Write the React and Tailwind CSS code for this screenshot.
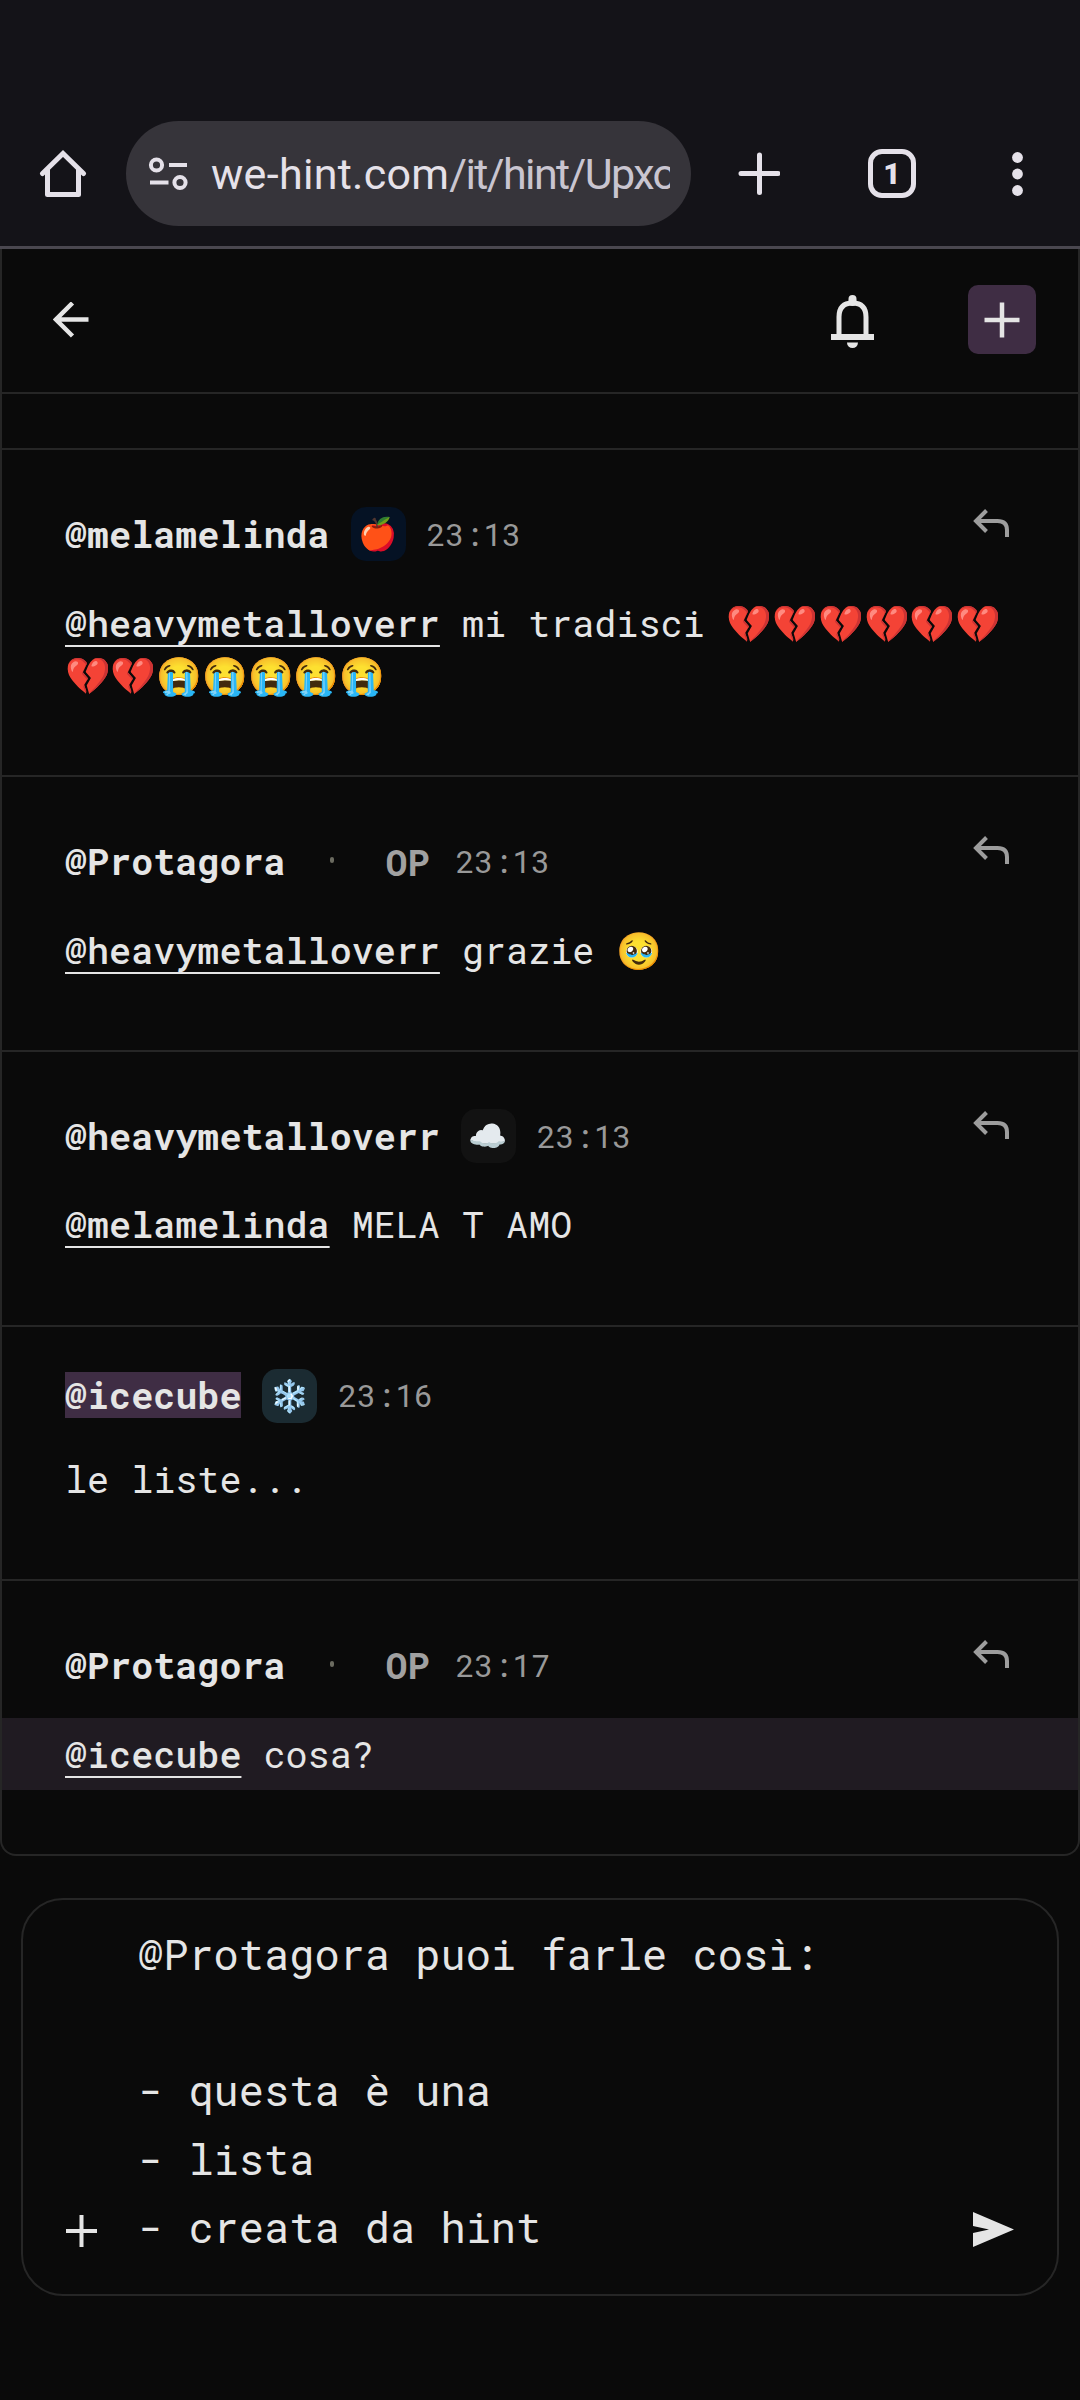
import React from 'react';

const messages = [
  {
    id: 1,
    user: '@melamelinda',
    badge: '🍎',
    badgeClass: 'bg-[#051224]',
    time: '23:13',
    mention: '@heavymetalloverr',
    text: ' mi tradisci 💔💔💔💔💔💔 💔💔😭😭😭😭😭',
    canReply: true,
  },
  {
    id: 2,
    user: '@Protagora',
    op: true,
    time: '23:13',
    mention: '@heavymetalloverr',
    text: ' grazie 🥹',
    canReply: true,
  },
  {
    id: 3,
    user: '@heavymetalloverr',
    badge: '☁️',
    badgeClass: 'bg-[#121212]',
    time: '23:13',
    mention: '@melamelinda',
    text: ' MELA T AMO',
    canReply: true,
  },
  {
    id: 4,
    user: '@icecube',
    badge: '❄️',
    badgeClass: 'bg-[#1b2b32]',
    time: '23:16',
    text: 'le liste...',
    own: true,
  },
  {
    id: 5,
    user: '@Protagora',
    op: true,
    time: '23:17',
    mention: '@icecube',
    text: ' cosa?',
    canReply: true,
    highlighted: true,
  },
];

const HomeIcon = () => (
  <svg className="w-12 h-12" viewBox="0 0 48 48" fill="none" stroke="#e5e1e9" strokeWidth="5" strokeLinecap="round" strokeLinejoin="round">
    <path d="M3.500 23.500L24 3.500L44.500 23.500" strokeLinejoin="miter" />
    <path d="M8.500 20V44.500H39.500V20" />
  </svg>
);

const SiteIcon = () => (
  <svg className="w-10 h-[34px]" viewBox="0 0 40 34" fill="none" stroke="#e5e1e9" strokeWidth="4">
    <circle cx="8.500" cy="8" r="5.600" />
    <path d="M21 8H39M2 25.500H20.500" />
    <circle cx="32" cy="25.500" r="5.600" />
  </svg>
);

const ReplyIcon = () => (
  <svg className="w-9 h-7" viewBox="0 0 36 28" fill="none" stroke="#9d9d9d" strokeWidth="4">
    <path d="M13.500 1.500L3 12L13.500 22.500" />
    <path d="M3 12H24.500Q34 12 34 21V28" />
  </svg>
);

const BrowserBar = () => (
  <div className="h-[249px] pt-[121px] bg-[#141318] border-b-3 border-[#4a474f]">
    <div className="flex items-center h-[105px] pl-[39px]">
      <HomeIcon />
      <div className="flex items-center w-[565px] h-[105px] ml-[39px] pl-[22px] rounded-full bg-[#36343a]">
        <SiteIcon />
        <div className="w-[459px] ml-[23px] mt-0.5 overflow-hidden whitespace-nowrap font-['Roboto',sans-serif] text-[43px] tracking-[-1.600px] text-[#c9c5d0]">
          <span className="tracking-[0.300px] text-[#e5e1e9]">we-hint.com</span>/it/hint/Upxo
        </div>
      </div>
      <svg className="w-[42px] h-[44px] ml-[47px]" viewBox="0 0 42 44" stroke="#e5e1e9" strokeWidth="5" strokeLinecap="round">
        <path d="M21.500 3V40.500M3 21.500H40" />
      </svg>
      <div className="flex items-center justify-center w-12 h-[49px] ml-[88px] rounded-[14px] border-5 border-[#e5e1e9] font-['Roboto',sans-serif] text-[30px] font-black leading-none text-[#e5e1e9]">
        1
      </div>
      <svg className="w-3 h-[46px] ml-[95px]" viewBox="0 0 12 46" fill="#e5e1e9">
        <circle cx="6.500" cy="6.500" r="5.400" />
        <circle cx="6.500" cy="23" r="5.400" />
        <circle cx="6.500" cy="39.500" r="5.400" />
      </svg>
    </div>
  </div>
);

const TopBar = () => (
  <div className="flex items-center h-[145px] pl-[51px] pr-[42px] pb-[2px] border-b-2 border-[#262626]">
    <svg className="w-9 h-9" viewBox="0 0 36 36" fill="none" stroke="#e5e5e5" strokeWidth="4.500">
      <path d="M35.500 17.500H3M19.500 1L3 17.500L19.500 34" />
    </svg>
    <svg className="w-[44px] h-[56px] ml-auto mt-[5px]" viewBox="0 0 44 56" fill="none" stroke="#e5e5e5" strokeWidth="5">
      <path d="M21.500 5V8" strokeWidth="8" strokeLinecap="round" />
      <path d="M8 42.500V23Q8 9 21.500 9Q35 9 35 23V42.500" />
      <path d="M0 43H43" strokeWidth="6" />
      <path d="M16 48.500H27A5.500 5.500 0 0 1 16 48.500Z" fill="#e5e5e5" stroke="none" />
    </svg>
    <div className="flex items-center justify-center w-[68px] h-[69px] ml-[93px] rounded-[10px] bg-[#3f2d44]">
      <svg className="w-9 h-9" viewBox="0 0 36 36" stroke="#e5e5e5" strokeWidth="4.500">
        <path d="M18 0.500V35.500M0.500 18H35.500" />
      </svg>
    </div>
  </div>
);

const Message = ({ message }) => (
  <div className={message.own ? 'pt-[42px] pb-[73.700px]' : 'pt-[57px] pb-[73.700px]'}>
    <div className="flex items-center h-[54px] pl-[63px] pr-[69px]">
      <span className={message.own ? 'h-[46px] mb-0.5 leading-[46px] font-bold bg-[#3f2d44]' : 'h-[46px] leading-[46px] font-bold'}>
        {message.user}
      </span>
      {message.badge && (
        <span className={`flex items-center justify-center w-[55px] h-[54px] ml-[21px] rounded-[15px] text-[31.500px] ${message.badgeClass}`}>
          {message.badge}
        </span>
      )}
      {message.op && (
        <>
          <span className="w-1 h-1.5 ml-[44px] mb-0.5 mr-[52px] rounded-full bg-[#6b6b60]"></span>
          <span className="font-bold text-[#a1a1a1]">OP</span>
        </>
      )}
      <span className={message.op ? 'ml-[26px] mt-px text-[31.500px] text-[#999999]' : 'ml-[21px] mt-px text-[31.500px] text-[#999999]'}>
        {message.time}
      </span>
      {message.canReply && (
        <span className="ml-auto mb-[22px]">
          <ReplyIcon />
        </span>
      )}
    </div>
    <div className={message.highlighted ? 'mt-[26px] -mb-[10px] px-[63px] py-[10px] bg-[#201b22]' : message.own ? 'mt-[30px] px-[63px]' : 'mt-[35.500px] px-[63px]'}>
      <p className="leading-[52.500px]">
        {message.mention && (
          <span className="font-medium underline decoration-2 underline-offset-8 [text-decoration-skip-ink:none]">{message.mention}</span>
        )}
        {message.text}
      </p>
    </div>
  </div>
);

const Composer = () => (
  <div className="flex items-end h-[398px] mx-[21px] mt-[42px] pl-[43px] pr-[43px] pb-[16px] rounded-[42px] border-2 border-[#262626]">
    <svg className="w-8 h-8 mb-[31px]" viewBox="0 0 32 32" stroke="#e5e5e5" strokeWidth="4">
      <path d="M15.500 0V32M0 16H31" />
    </svg>
    <div className="ml-[40px] mb-[17px] whitespace-pre text-[42px] leading-[68.250px]">
      {'@Protagora puoi farle così:\n\n- questa è una\n- lista\n- creata da hint'}
    </div>
    <svg className="w-[41px] h-[35px] ml-auto mb-[31px]" viewBox="0 0 41 35" fill="#e5e5e5">
      <path d="M0 0L41 17.500L0 35V21L16 17.500L0 14Z" />
    </svg>
  </div>
);

const App = () => {
  return (
    <div className="w-[1080px] h-[2400px] overflow-hidden bg-[#0a0a0a] font-['Roboto_Mono','DejaVu_Sans_Mono','Noto_Color_Emoji',monospace] text-[36.750px] text-[#e5e5e5]">
      <BrowserBar />
      <div className="h-[1607px] border-x-2 border-b-2 border-[#262626] rounded-b-[16px]">
        <TopBar />
        <div className="h-14 border-b-2 border-[#262626]"></div>
        <div className="divide-y-2 divide-[#262626]">
          {messages.map((message) => (
            <Message key={message.id} message={message} />
          ))}
        </div>
      </div>
      <Composer />
    </div>
  );
};

export default App;
